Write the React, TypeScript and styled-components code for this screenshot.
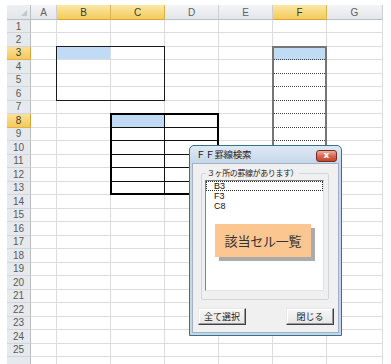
import React from "react";
import styled, { createGlobalStyle, css } from "styled-components";

const GlobalStyle = createGlobalStyle`
  html, body { margin: 0; padding: 0; background: #ffffff; }
  body { width: 391px; height: 364px; overflow: hidden; }
`;

const COLS = ["A", "B", "C", "D", "E", "F", "G"];
const ROW_COUNT = 26;
const LABELLED_ROWS = 25;
const ACTIVE_COLS = [1, 2, 5];
const ACTIVE_ROWS = [3, 8];

type Line = "grid" | "dot" | "black";

const Page = styled.div`
  position: relative;
  width: 391px;
  height: 364px;
  overflow: hidden;
  box-sizing: border-box;
  padding: 5px 0 0 7px;
  font-family: "Liberation Sans", Arial, sans-serif;
`;

const Sheet = styled.div`
  display: grid;
  grid-template-columns: 24px 26px repeat(5, 54px) 56px;
  grid-template-rows: 15px 13px repeat(25, 13.5px);
`;

const Placed = styled.div.attrs<{ $col: string; $row: string }>((p) => ({
  style: { gridColumn: p.$col, gridRow: p.$row },
}))<{ $col: string; $row: string }>``;

const Corner = styled(Placed)`
  box-sizing: border-box;
  background: linear-gradient(#eef0f3, #e2e5e9);
  border-right: 1px solid #b9bec5;
  border-bottom: 1px solid #b9bec5;
  display: flex;
  align-items: flex-end;
  justify-content: flex-end;
  padding: 0 3px 3px 0;
`;

const CornerMark = styled.span`
  width: 0;
  height: 0;
  border-left: 6px solid transparent;
  border-bottom: 6px solid #c2c7cd;
`;

const ColHead = styled(Placed)<{ $active: boolean }>`
  box-sizing: border-box;
  display: flex;
  align-items: center;
  justify-content: center;
  font-size: 10px;
  color: #606060;
  background: linear-gradient(#f4f5f7, #e3e6ea);
  border-right: 1px solid #cbd0d6;
  border-bottom: 1px solid #b9bec5;
  ${(p) =>
    p.$active &&
    css`
      color: #3a3a3a;
      background: linear-gradient(#fbe7a6, #f4cb5b);
      border-right-color: #e2b24a;
      border-bottom-color: #d9a43a;
    `}
`;

const RowHead = styled(Placed)<{ $active: boolean }>`
  box-sizing: border-box;
  display: flex;
  align-items: center;
  justify-content: center;
  font-size: 10px;
  color: #5a5a5a;
  background: #e6e9ed;
  border-right: 1px solid #b9bec5;
  border-bottom: 1px solid #d2d6db;
  ${(p) =>
    p.$active &&
    css`
      color: #3a3a3a;
      background: linear-gradient(#fbe19a, #f3c95a);
      border-right-color: #d9a43a;
      border-bottom-color: #e2b24a;
    `}
`;

const lineStyle = (l: Line) =>
  l === "dot" ? "1px dotted #3c3c3c" : l === "black" ? "1px solid #111111" : "1px solid #dadcdf";

const Cell = styled(Placed)<{ $fill: boolean; $bottom: Line; $right: Line }>`
  box-sizing: border-box;
  background: ${(p) => (p.$fill ? "#c2dbf5" : "#ffffff")};
  border-bottom: ${(p) => lineStyle(p.$bottom)};
  border-right: ${(p) => lineStyle(p.$right)};
`;

const RangeFrame = styled(Placed)<{ $kind: "thin" | "gray" | "thick" }>`
  box-sizing: border-box;
  margin: -1px 0 0 -1px;
  pointer-events: none;
  border: ${(p) =>
    p.$kind === "thin" ? "1px solid #1a1a1a" : p.$kind === "gray" ? "2px solid #767676" : "2px solid #000000"};
`;

/* ---------- dialog ---------- */

const Dialog = styled.div`
  position: absolute;
  left: 189px;
  top: 145px;
  width: 153px;
  height: 191px;
  box-sizing: border-box;
  border: 1px solid #3c6f88;
  border-radius: 5px 5px 0 0;
  background: linear-gradient(#dfe9f4, #c6d8ea 16px, #c3d7ea);
  padding: 0 2px 2px 2px;
  display: flex;
  flex-direction: column;
  font-family: "Noto Sans CJK JP", "Liberation Sans", sans-serif;
  color: #1e1e1e;
`;

const TitleBar = styled.div`
  height: 17px;
  display: flex;
  align-items: center;
  justify-content: space-between;
  padding: 0 2px 0 4px;
`;

const Title = styled.span`
  font-size: 9.5px;
  line-height: 1;
  color: #222;
  letter-spacing: -0.3px;
`;

const CloseButton = styled.div`
  width: 21px;
  height: 12px;
  margin-top: 2px;
  box-sizing: border-box;
  border: 1px solid #7a2b20;
  border-radius: 3px;
  background: linear-gradient(#eab0a0, #d66a54 50%, #c3432d);
  display: flex;
  align-items: center;
  justify-content: center;
  color: #ffffff;
  font-family: "DejaVu Sans", sans-serif;
  font-weight: bold;
  font-size: 9px;
  line-height: 1;
`;

const Client = styled.div`
  flex: 1;
  box-sizing: border-box;
  background: #f0f0f0;
  border: 1px solid #9fb3c6;
  display: flex;
  flex-direction: column;
  padding: 9px 4px 0 5px;
`;

const GroupBox = styled.div`
  position: relative;
  box-sizing: border-box;
  width: 128px;
  height: 127px;
  margin-left: 3px;
  border: 1px solid #d0d6dc;
  border-radius: 2px;
  padding: 6px 0 0 3px;
`;

const GroupLabel = styled.span`
  position: absolute;
  left: 4px;
  top: -6px;
  padding: 0 1px;
  background: #f0f0f0;
  font-size: 8px;
  line-height: 10px;
  color: #222;
  letter-spacing: -0.4px;
`;

const ListBox = styled.div`
  box-sizing: border-box;
  width: 119px;
  height: 111px;
  background: #ffffff;
  border: 1px solid;
  border-color: #828282 #e2e2e2 #e2e2e2 #828282;
  display: flex;
  flex-direction: column;
  padding: 0;
`;

const ListItem = styled.div<{ $focused: boolean }>`
  box-sizing: border-box;
  height: 10px;
  padding-left: 7px;
  font-family: "Liberation Sans", Arial, sans-serif;
  font-size: 9px;
  line-height: 8px;
  color: #111;
  border: 1px solid transparent;
  ${(p) =>
    p.$focused &&
    css`
      border: 1px dotted #2a2a2a;
    `}
`;

const Callout = styled.div`
  width: 96px;
  height: 33px;
  margin: 13px 0 0 9px;
  box-sizing: border-box;
  background: #fbc690;
  box-shadow: 4px 4px 0 #ababab;
  display: flex;
  align-items: center;
  justify-content: center;
  font-size: 13px;
  color: #333;
  letter-spacing: -0.2px;
`;

const ButtonRow = styled.div`
  display: flex;
  justify-content: space-between;
  margin-top: 8px;
`;

const Button = styled.div`
  width: 48px;
  height: 17px;
  box-sizing: border-box;
  background: linear-gradient(#f7f7f7, #e6e6e6);
  border: 1px solid;
  border-color: #e8e8e8 #404040 #404040 #e8e8e8;
  box-shadow: inset -1px -1px 0 #9a9a9a, inset 1px 1px 0 #ffffff;
  display: flex;
  align-items: center;
  justify-content: center;
  font-size: 9px;
  line-height: 1;
  color: #222;
`;

const area = (c0: number, c1: number, r0: number, r1: number) => ({
  $col: `${c0 + 2} / ${c1 + 3}`,
  $row: `${r0 + 1} / ${r1 + 2}`,
});

export default function App() {
  const cells: React.ReactNode[] = [];
  for (let r = 1; r <= ROW_COUNT; r++) {
    for (let c = 0; c < COLS.length; c++) {
      const fill = (r === 3 && (c === 1 || c === 5)) || (r === 8 && c === 2);
      let bottom: Line = "grid";
      let right: Line = "grid";
      if (c === 5 && r >= 3 && r <= 12) bottom = "dot";
      if ((c === 2 || c === 3) && r >= 8 && r <= 12) bottom = "black";
      if (c === 2 && r >= 8 && r <= 13) right = "black";
      cells.push(
        <Cell
          key={`${r}-${c}`}
          $col={`${c + 2}`}
          $row={`${r + 1}`}
          $fill={fill}
          $bottom={bottom}
          $right={right}
        />
      );
    }
  }

  return (
    <Page>
      <GlobalStyle />
      <Sheet>
        <Corner $col="1" $row="1">
          <CornerMark />
        </Corner>
        {COLS.map((name, i) => (
          <ColHead key={name} $col={`${i + 2}`} $row="1" $active={ACTIVE_COLS.includes(i)}>
            {name}
          </ColHead>
        ))}
        {Array.from({ length: ROW_COUNT }, (_, i) => i + 1).map((r) => (
          <RowHead key={r} $col="1" $row={`${r + 1}`} $active={ACTIVE_ROWS.includes(r)}>
            {r <= LABELLED_ROWS ? r : ""}
          </RowHead>
        ))}
        {cells}
        <RangeFrame $kind="thin" {...area(1, 2, 3, 6)} />
        <RangeFrame $kind="gray" {...area(5, 5, 3, 13)} />
        <RangeFrame $kind="thick" {...area(2, 3, 8, 13)} />
      </Sheet>

      <Dialog>
        <TitleBar>
          <Title>ＦＦ罫線検索</Title>
          <CloseButton>x</CloseButton>
        </TitleBar>
        <Client>
          <GroupBox>
            <GroupLabel>３ヶ所の罫線があります）</GroupLabel>
            <ListBox>
              <ListItem $focused>B3</ListItem>
              <ListItem $focused={false}>F3</ListItem>
              <ListItem $focused={false}>C8</ListItem>
              <Callout>該当セル一覧</Callout>
            </ListBox>
          </GroupBox>
          <ButtonRow>
            <Button>全て選択</Button>
            <Button>閉じる</Button>
          </ButtonRow>
        </Client>
      </Dialog>
    </Page>
  );
}
